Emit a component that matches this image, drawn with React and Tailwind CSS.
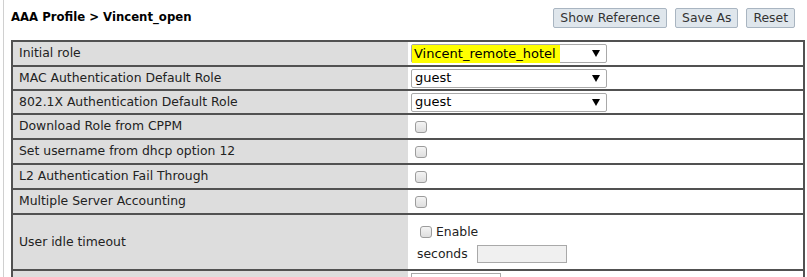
import React from "react";

const font = "font-['Verdana','DejaVu_Sans',sans-serif]";

const Checkbox = () => (
  <span className="inline-block w-[12px] h-[12px] rounded-[3px] border border-[#9c9c9c] bg-gradient-to-b from-[#f4f4f4] to-[#dedede]" />
);

const Select = ({ value, highlight }) => (
  <div className="relative w-[196px] h-[19px] border border-[#a9a9a9] rounded-[2px] bg-white flex items-center text-[13px] text-black">
    {highlight ? (
      <span className="bg-[#ffff00] pl-[2px] pr-[4px] h-[18px] flex items-center">{value}</span>
    ) : (
      <span className="pl-[3px]">{value}</span>
    )}
    <span className="absolute right-[6px] top-[5px] w-0 h-0 border-l-[4px] border-r-[4px] border-t-[7px] border-l-transparent border-r-transparent border-t-black" />
  </div>
);

const Row = ({ label, h = "h-[25px]", children }) => (
  <div className={`flex ${h}`}>
    <div className="w-[395px] shrink-0 bg-[#dddddd] border-t-2 border-[#515151] flex items-center pl-[6px] text-[12.4px] text-[#222]">
      {label}
    </div>
    <div className="flex-1 border-t-2 border-[#515151] flex items-center pl-[3px]">
      {children}
    </div>
  </div>
);

export default function App() {
  const rows = [
    { label: "MAC Authentication Default Role", h: "h-[24px]", sel: "guest" },
    { label: "802.1X Authentication Default Role", h: "h-[24px]", sel: "guest" },
    { label: "Download Role from CPPM", h: "h-[25px]" },
    { label: "Set username from dhcp option 12", h: "h-[25px]" },
    { label: "L2 Authentication Fail Through", h: "h-[25px]" },
    { label: "Multiple Server Accounting", h: "h-[25px]" },
  ];

  return (
    <div className={`w-[807px] h-[277px] overflow-hidden bg-white pl-[3px] ${font}`}>
      <div className="h-full border-l border-[#d0d0d0] pl-[7px] pr-[2px]">
        <div className="h-[40px] pb-[5px] flex items-center justify-between">
          <h1 className="text-[11.7px] font-bold text-black">AAA Profile &gt; Vincent_open</h1>
          <div className="flex gap-[8px] mr-[10px] text-[12.4px] text-[#333]">
            <button className="h-[20px] px-[6px] bg-[#dfe6ec] border border-[#a9b5c1] rounded-[2px]">Show Reference</button>
            <button className="h-[20px] px-[6px] bg-[#dfe6ec] border border-[#a9b5c1] rounded-[2px]">Save As</button>
            <button className="h-[20px] px-[6px] bg-[#dfe6ec] border border-[#a9b5c1] rounded-[2px]">Reset</button>
          </div>
        </div>

        <div className="border-l-2 border-r-2 border-[#515151]">
          <Row label="Initial role">
            <Select value="Vincent_remote_hotel" highlight />
          </Row>
          {rows.map((r) => (
            <Row key={r.label} label={r.label} h={r.h}>
              {r.sel ? (
                <Select value={r.sel} />
              ) : (
                <span className="pl-[4px] flex">
                  <Checkbox />
                </span>
              )}
            </Row>
          ))}
          <Row label="User idle timeout" h="h-[56px]">
            <div className="flex flex-col text-[12.4px] text-[#222]">
              <div className="flex items-center pl-[9px] gap-[4px] h-[24px] pt-[4px]">
                <Checkbox />
                <span>Enable</span>
              </div>
              <div className="flex items-center pl-[6px] gap-[9px] h-[24px]">
                <span>seconds</span>
                <span className="w-[90px] h-[18px] bg-[#f0f0f0] border border-[#a9a9a9]" />
              </div>
            </div>
          </Row>
          <div className="flex h-[25px]">
            <div className="w-[395px] shrink-0 bg-[#dddddd] border-t-2 border-[#515151]" />
            <div className="flex-1 border-t-2 border-[#515151] pl-[3px] pt-[2px]">
              <span className="block w-[90px] h-[18px] bg-white border border-[#a9a9a9]" />
            </div>
          </div>
        </div>
      </div>
    </div>
  );
}
